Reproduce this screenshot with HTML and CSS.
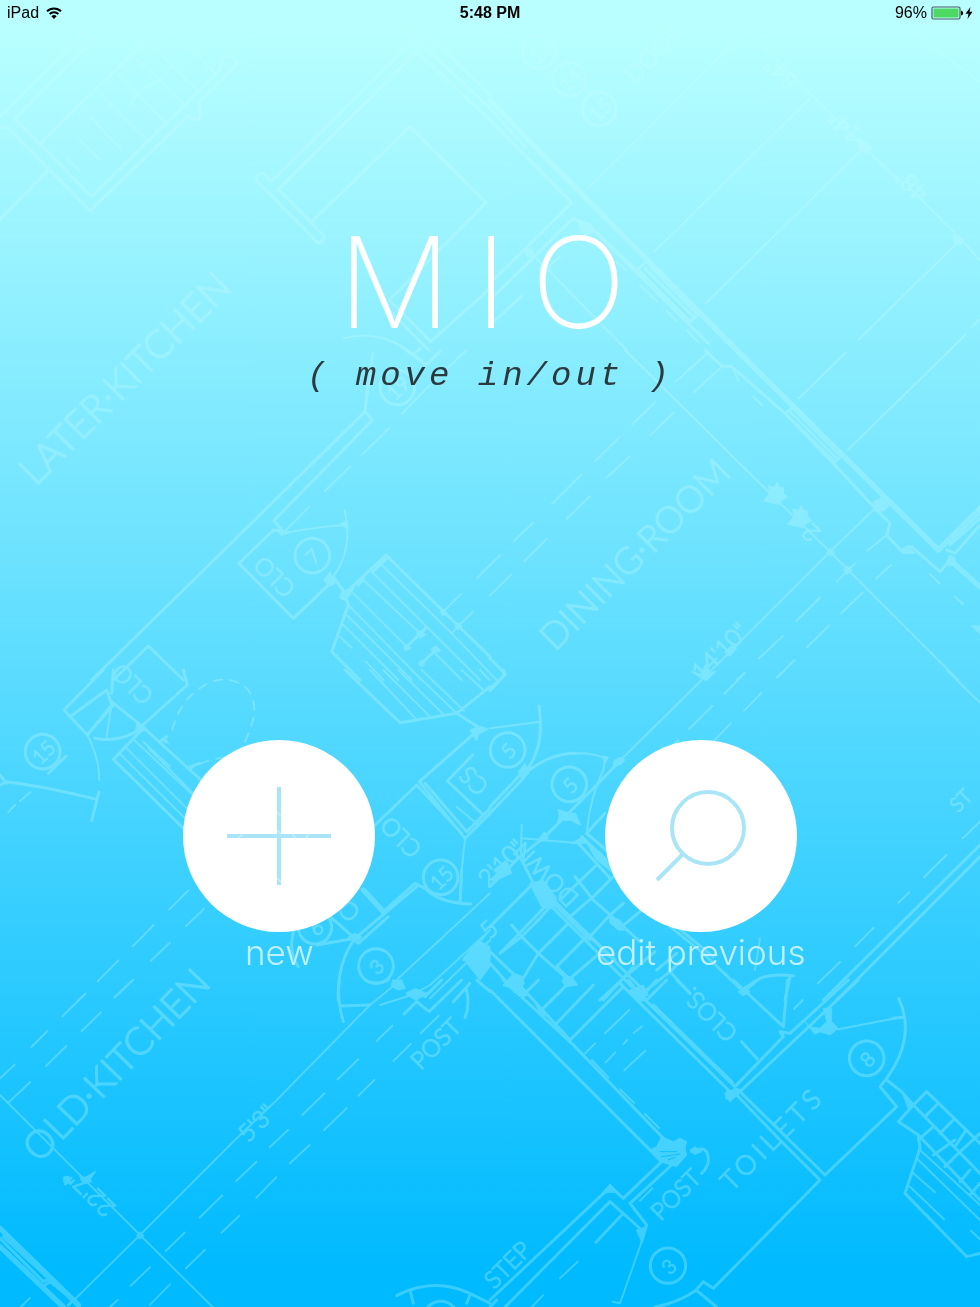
FILE: index.html
```html
<!DOCTYPE html>
<html lang="en">
<head>
<meta charset="utf-8">
<meta name="viewport" content="width=device-width, initial-scale=1">
<title>MIO</title>
<link rel="stylesheet" href="styles.css">
</head>
<body>
<div class="screen">
  <svg class="blueprint" viewBox="0 0 2940 3921" preserveAspectRatio="xMidYMid slice" aria-hidden="true">
    <g class="ink">
      <!-- upper left rooms -->
      <g transform="translate(0 60)">
        <path d="M0 290L260 30M0 325L20 320 270 572 565 288Q590 308 602 290L598 245 712 130Q690 90 665 120L660 150 275 530 45 295 300 40M120 370L450 50M145 450L0 598"/>
        <path class="thin" d="M440 60L595 215M410 115L555 255M350 160L495 305M300 220L440 360M270 290L365 390M235 355L300 420M200 415L240 455M520 30L645 160M390 255L415 215 480 180 520 130"/>
        <path d="M1240 60L815 485 790 460Q765 462 768 480L955 670Q980 660 970 645L835 508 1250 95 1470 300M935 605L1230 320 1458 548 1168 840 1292 965 1470 805M1145 848L1285 990M1210 20L1470 265M1260 20L1470 225"/>
      </g>
      <!-- upper right walls -->
      <g transform="translate(1470 60)">
        <path class="wall" d="M130 375L740 990M0 240L130 375"/>
        <path d="M0 300L245 548 0 790M0 265L105 380M0 840L250 595 300 620 655 970M0 915L95 828"/>
        <path d="M300 620L440 750 470 725M450 755L600 905 630 880M465 745L610 890M478 738L620 882"/>
        <path class="thin" d="M755 45L297 503M965 230L493 695M1120 385L647 850M1405 665L1107 958M770 30L965 225 1120 380 1225 480M1255 500L1405 650 1470 720M120 695L410 990M148 765L210 710M1250 20L1470 185M1380 990L1425 945M1445 920L1470 898M450 795L502 845M530 872L560 904M590 930L625 967M380 725L410 752"/>
        <circle cx="148" cy="95" r="50"/><circle cx="238" cy="177" r="50"/><circle cx="328" cy="267" r="50"/>
        <path class="fill" d="M1100 355l25 10 22 20-22 15-12-12zM1390 645l30 10-5 20-18-4zM265 600l35 10 15 22-30 15-15-20zM100 690l25-5 8 25-20 0zM150 740l18-10 15 18-15 12-18 8z"/>
      </g>
      <!-- closet and stair, middle left -->
      <g transform="translate(0 1050)">
        <path d="M275 990L1095 185 1117 210 822 512 850 545M1095 185L1105 90M850 545L820 540 717 640 880 805 990 700 975 690 1000 680 1035 730 1158 615 1375 828 1470 920"/>
        <path class="thin" d="M1095 185Q1105 120 1118 10M860 548Q950 530 1043 525M1034 480Q1060 600 1000 680"/>
        <path class="thin" d="M1167 235L1085 315M1052 348L975 423M928 470L855 543M1290 105L1205 192M1400 0L1305 90M1383 732L1330 785M1418 787L1375 828M1470 645L1433 683"/>
        <path d="M1205 -10L1278 45 1325 0M1240 15L1260 -5M1035 730L1045 765 995 905 1080 990M1040 730L1060 715M1160 625L1118 665M1075 705L1090 685"/>
        <path class="thin" d="M1140 640L1355 850 1490 990M1115 665L1320 870 1440 990M1090 690L1260 850M1055 725L1220 890M1045 765L1265 990M1040 795L1235 990M1030 825L1195 990M1020 860L1055 893M1098 935L1150 990M1295 900L1385 990M1355 850L1375 828"/>
        <path d="M1280 832L1215 895M1308 900L1262 942"/>
        <path class="fill" d="M835 540l35 5-25 12zM1020 522l22-10 2 25zM972 690l18-25 8 20 12 12-20 12zM1022 730l18-12 14 14-20 20-14-8zM1250 850l12-8 15 12-15 10zM1296 895l12-8 15 15-15 5zM1320 785l10-8 12 12-12 8zM1365 828l10-10 12 12-12 10zM1210 892l8-8 14 10-14 8zM1255 940l8-8 12 10-10 8z"/>
        <circle cx="937" cy="617" r="52"/>
        <circle cx="1192" cy="112" r="52"/>
        <path class="thin" d="M1030 -35Q1150 -70 1270 35"/>
        <path d="M340 990L445 888 550 990"/>
      </g>
      <!-- dining room -->
      <g transform="translate(1470 1050)">
        <path class="wall" d="M740 0L1345 600 1470 475"/>
        <path d="M645 0L695 48 725 50 885 190 1030 340 1155 475 1200 520 1190 555 1238 607 1265 590 1350 665 1380 630"/>
        <path class="wall" d="M1380 630L1475 715"/>
        <path d="M905 175L885 190M890 195L1030 330M900 185L1040 325M912 178L1050 318M1030 340L1050 322M1155 475L1175 445M1380 575L1470 490M1370 600L1395 610 1470 525M1380 585L1470 505"/>
        <path class="thin" d="M405 0L830 420 1020 605 1405 990M1155 475L1020 605 735 890 640 985M1190 555L1132 602M1020 605L1095 680M1095 640L1040 695M1065 10L927 145M1380 0L1073 300M652 10L555 97M695 50L612 127"/>
        <path class="thin" d="M497 155L427 223M550 188L482 255M388 262L316 333M418 320L349 384M275 373L186 461M298 440L230 506M129 518L71 574M170 567L103 633M31 615L0 645M63 674L0 737M1203 645L1158 686M1118 728L1053 790M1018 826L952 891M914 930L860 983M989 744L919 813M879 858L808 924M763 970L740 990M1320 672L1348 700M1395 740L1418 762M790 140L818 167M730 60L745 92"/>
        <path class="fill" d="M822 452l18-25-5-20 18 5 8-15 8 15 12 2-2 16 14 12-14 6-12 14zM893 522l20-25-5-20 18 5 8-15 8 15 12 2-2 16 14 12-14 6-12 14zM1010 607l12-12 12 12-12 12zM1060 660l12-12 15 12-15 12zM1150 455l25-12 22 25-15 15-25 0zM1230 600l25-15 20 25-30 0zM1370 635l8-20 16 8 4 20-20 5zM605 965l28 8 18-40 8 35 20-5-30 30zM705 905l20-18 15 8-18 22zM1445 828l25 0 0 22z"/>
        <path d="M0 925L45 970 30 990 0 1022"/>
      </g>
      <!-- left doors, lower stair -->
      <g transform="translate(0 2010)">
        <path d="M310 0L192 120 262 195 335 105 320 60 210 140M550 0L562 45 425 168 335 95M340 0L335 70M262 195L340 105M425 168L603 330M425 180L340 268 555 480M570 290L600 280M500 200L480 215"/>
        <path class="thin" d="M262 195Q300 270 297 330M320 200L335 100M375 230L570 425M400 208L600 395M430 215L510 290M445 235L580 370M358 250L560 450"/>
        <path d="M285 205Q360 220 425 175M0 345L20 335Q140 350 290 388M297 365L275 452M0 315L20 340M145 310L198 258"/>
        <path class="thin" stroke-dasharray="26 24" d="M735 215Q790 100 735 50Q650 -10 555 95Q520 150 515 190M675 262Q610 270 570 298"/>
        <circle cx="128" cy="245" r="52"/><circle cx="1322" cy="622" r="52"/><circle cx="1128" cy="888" r="52"/><circle cx="945" cy="772" r="50"/>
        <path class="thin" d="M92 366L60 393M45 405L25 427M565 661L508 718M461 765L398 829M355 871L294 933M256 972L235 990M612 716L558 768M509 818L452 873M399 929L344 982"/>
        <path d="M1035 0L1200 158 1370 130 1440 175 1258 335 1395 505 1470 430M1470 50L1370 130M1275 340L1400 485 1470 415M1125 465L1250 345 1385 490M1418 255L1342 333 1445 430"/>
        <path class="thin" d="M1395 505L1385 600M1370 410L1435 465M1110 0L1248 147M1150 0L1290 140M1195 0L1330 133M1235 0L1370 130M1265 0L1392 122M1385 0L1450 60M1440 0L1468 30"/>
        <path class="wall" d="M1090 660L1150 725"/>
        <path d="M1150 725L1245 640 1275 655Q1320 700 1412 702M1065 805L1250 650M1075 820L1165 740M990 740L1065 805 950 825M1065 805Q1010 880 1015 990M880 785Q865 850 895 890M1385 600L1380 700"/>
        <path class="thin" d="M1470 670L1195 925 1180 950M1470 780L1390 870M1245 970L1290 945 1470 780M1470 810L1290 985"/>
        <path class="fill" d="M1410 180l30-12 25 10-28 14-7 20zM1180 930l20 5 15 15-20 10-20-10zM1390 865l45-55 35 20 0 60-30 40-20-25zM1220 968l25-12 40 15-20 10zM1045 800l20-10 20 10-15 20zM412 160l14 5 15 10-15 10-18-5zM480 210l15-10 10 20z"/>
      </g>
      <!-- stairwell -->
      <g transform="translate(1470 2010)">
        <path d="M0 430L100 325 110 300Q165 230 147 108M0 410L95 310M105 310Q180 250 257 250M390 272L315 350 165 500 90 560 0 650M290 490L345 430M0 55L45 15 40 0"/>
        <path class="thin" d="M390 272L635 30M0 175L150 155M257 250Q320 250 345 265L340 300Q300 380 290 490M92 565L95 465M95 505L270 520"/>
        <circle cx="53" cy="240" r="52"/><circle cx="238" cy="343" r="52"/>
        <path d="M95 570L130 640 175 700 450 975M275 500L340 565 370 600M290 490L360 550M265 520L360 625M150 650L460 960M0 880L75 965M180 690L300 810M0 845L100 940M240 740L375 870M255 620L310 690 355 730 450 815M540 770L640 850 760 965M560 770L670 860M30 850L95 800 65 765M95 800L145 850 235 930M250 940L200 890M0 770L130 640M30 850L175 700M95 800L150 745 180 710M145 850L235 760M200 890L290 800M235 930L340 840M75 965L145 850M330 990L400 925 430 890M400 925L470 990M210 690L320 585M240 740L310 680 370 620M300 800L355 740 400 700M450 725L395 770M500 900L560 850M400 925L495 845M340 990L400 925"/>
        <path class="thin" d="M763 10L703 72M815 68L763 122M667 108L598 176M722 160L672 212M885 0L860 22M1370 0L1470 98M1369 556L1302 622M1258 667L1225 698M1151 773L1096 829M1050 876L984 940M1470 455L1418 505M565 210L540 235M810 805L795 900"/>
        <path d="M1470 525L1000 990M1470 560L1040 990M760 965L810 925Q850 910 912 918M900 920L885 990M450 975L540 905 600 970M540 905L580 865"/>
        <path class="fill" d="M205 418l22 8 30 5 15 35-30-15-30 0-10 8 5-22zM245 520l35-20 25 25 45 40 20 45-50-40-30-50zM120 640l40-10 40 55-10 30-35-5zM360 740l30 10 20 30-25 0-25-20zM225 915l25 10 12 20-35 5-10-15zM375 270l15-8 15 8-15 15-20-2zM85 305l20-25 12 30-20 18zM340 258l15 4-10 20zM148 505l15-20 12 20-20 10zM745 965l20-15 15 15-20 12zM0 630l20-20-10-10 40-30 15 40-45 20zM420 960l40-15 15 30-40 15zM40 945l30-35 30 10-5 45z"/>
      </g>
      <!-- old kitchen -->
      <g transform="translate(0 2940)">
        <path class="thin" d="M0 345L250 595 420 765 638 981M220 962L420 765 705 480 820 370 1110 75 1190 10M25 368L90 307M0 295L44 254M256 41L187 109M303 97L245 153M142 153L94 201M199 198L138 258M294 3L297 0M399 0L344 52M1177 137L1130 183M1075 238L1013 298M1123 300L1075 347M974 340L907 405M1040 385L972 450M864 450L809 502M929 495L870 550M769 545L709 603M829 592L769 653M667 646L599 713M718 707L664 758M554 758L497 813M615 809L558 865M450 862L392 917M510 913L450 974M353 960L330 981M90 954L62 981M1232 192L1180 243M1316 107L1262 160M1140 75L1235 45"/>
        <path class="wall" d="M0 745L235 975M0 800L190 981"/>
        <path d="M0 775L130 905M10 770L145 895M130 905L150 895M135 915L150 905 220 960 205 975M1018 0Q1010 60 1030 125M1020 78L1110 75M1095 0Q1125 20 1165 0M1222 45L1250 35 1275 50 1325 0M1212 102L1250 65 1287 95 1385 0M1360 65L1410 10M1400 30Q1410 80 1395 112M1430 0L1470 35"/>
        <path d="M1190 947Q1300 890 1410 940L1470 970M1230 930L1240 970M1410 945L1400 970"/>
        <circle cx="1322" cy="1016" r="52"/>
        <path class="fill" d="M240 590l15 2 32-18-20 30-18 6zM410 765l10-10 12 12-12 10zM1180 0l25 0 10 25-20 5-20-15zM1220 42l30-15 20 15-20 20zM190 592q25-12 20 15l-15 8z"/>
      </g>
      <!-- toilets and lower stair -->
      <g transform="translate(1470 2940)">
        <path d="M0 30L500 530 515 545 400 655 362 620 0 960M40 0L245 190 520 475M75 0L240 180M420 670L545 555M420 670L470 735 455 785M45 981L360 665 455 750M20 960L0 981M395 705L318 787M400 655L415 640M415 0L455 50 735 320 880 170 870 155 900 160 1075 0M390 10L715 330 710 355 740 345 870 480 990 600 670 925 640 905 618 930 680 981M755 330L1105 0M755 340L1005 585 1220 380 1170 320 1190 295M100 45L145 0M150 95L235 10M190 140L310 15M240 180L400 20M460 45L500 0M475 55L530 0M730 0L880 140 893 0M765 25L800 0M560 0L600 40M620 930Q560 970 495 981"/>
        <path d="M1190 300L1235 335 1270 375 1225 425 1285 465 1290 505 1245 640 1430 830 1470 820M1270 375L1310 335 1470 490M1270 375L1470 580M1285 465L1470 660M1340 375L1305 410M1390 420L1350 460M1425 455L1395 500M1330 525L1395 480M1365 560L1405 520 1470 460M1410 605L1440 570M1440 645L1470 610M1285 480L1330 440"/>
        <path class="thin" d="M455 785L390 970 368 965M1290 510L1470 675M1285 540L1470 720M1270 580L1335 637M1260 620L1362 718M1443 752L1470 778M1045 148L1240 110M418 90L345 160M455 140L430 160M412 180L400 192M315 190L285 220M376 217L347 247M466 212L403 271M305 240L355 292M390 328L432 368M465 402L507 444M487 625L450 662M263 845L210 895M159 946L125 981M938 60L912 87"/>
        <path d="M490 75L728 308M1226 55Q1280 170 1190 295M1240 112L1208 115M605 515Q655 490 655 540 655 560 635 580M755 185L802 237"/>
        <circle cx="1130" cy="235" r="52"/><circle cx="534" cy="857" r="53"/>
        <path class="fill" d="M480 510l20-10 15-30 35 15 20-10 20 10-5 20 5 20-30 35-50-15zM945 125l15 15 30 5 20-20-10-40 25 0 0 40 20 20-25 20-30-10-15 8zM75 5l40 40-15 5-35-35zM135 70l40 40-20-5zM440 40l25 0 0 20-15 5zM705 340l30-15 25 5-40 35zM1240 345l35 30-20 10zM600 510l15-10 20 15-20 8zM335 640l25-28 25 25-25 0zM440 750l30-10-15 45z"/>
        <path class="cut" d="M510 515l50 0M515 530l55-8M535 540l20-8"/>
      </g>
      <!-- hand lettering -->
      <g class="lettering">
        <text class="kitchen" transform="translate(108 1462) rotate(-45)">LATER·KITCHEN</text>
        <text class="room" transform="translate(1665 1957) rotate(-45)">DINING·ROOM</text>
        <text class="kitchen" transform="translate(118 3492) rotate(-46)">OLD·KITCHEN</text>
        <text class="note" transform="translate(1262 3212) rotate(-45)">POST</text>
        <text class="note" transform="translate(1982 3665) rotate(-45)">POST</text>
        <text class="wide" transform="translate(2195 3577) rotate(-45)">TOILETS</text>
        <text class="note" transform="translate(1483 3870) rotate(-45)">STEP</text>
        <text class="tag" transform="translate(2874 2440) rotate(-45)">ST</text>
        <text class="note" transform="translate(1905 255) rotate(-45)">DOOR</text>
        <text class="note" transform="translate(890 1762) rotate(225)">CLO</text>
        <text class="note" transform="translate(465 2083) rotate(225)">CLO</text>
        <text class="note" transform="translate(1270 2543) rotate(225)">CLO</text>
        <text class="note" transform="translate(1085 2735) rotate(225)">CL</text>
        <text class="note" transform="translate(1470 2356) rotate(225)">CS</text>
        <text class="note" transform="translate(1740 2690) rotate(225)">DOWN</text>
        <text class="note" transform="translate(2217 3095) rotate(225)">CLOS.</text>
        <text class="note" transform="translate(2465 1595) rotate(225)">2</text>
        <text class="note" transform="translate(2105 2045) rotate(-45)">14'10"</text>
        <text class="note" transform="translate(1465 2665) rotate(-45)">2'10"</text>
        <text class="note" transform="translate(1470 2820) rotate(-45)">5</text>
        <text class="note" transform="translate(745 3430) rotate(-45)">5'3"</text>
        <text class="note" transform="translate(350 3620) rotate(225)">22'7"</text>
        <text class="note" transform="translate(2790 575) rotate(225)">48"</text>
        <text class="note" transform="translate(2590 400) rotate(225)">14"</text>
        <text class="note" transform="translate(2400 240) rotate(225)">84"</text>
        <g text-anchor="middle">
          <text class="tag" transform="translate(954 1685) rotate(-45)">7</text>
          <text class="tag" transform="translate(1210 1179) rotate(-45)">19</text>
          <text class="tag" transform="translate(146 2272) rotate(-45)">15</text>
          <text class="tag" transform="translate(1340 2649) rotate(-45)">15</text>
          <text class="tag" transform="translate(1146 2916) rotate(-45)">3</text>
          <text class="tag" transform="translate(963 2799) rotate(-45)">6</text>
          <text class="tag" transform="translate(1541 2268) rotate(-45)">5</text>
          <text class="tag" transform="translate(1726 2371) rotate(-45)">5</text>
          <text class="tag" transform="translate(2618 3193) rotate(-45)">8</text>
          <text class="tag" transform="translate(2022 3815) rotate(-45)">3</text>
          <text class="tag" transform="translate(1816 345) rotate(-45)">15</text>
          <text class="tag" transform="translate(1726 255) rotate(-45)">14</text>
          <text class="tag" transform="translate(1636 173) rotate(-45)">13</text>
        </g>
      </g>
    </g>
  </svg>

  <header class="status">
    <div class="status-left">
      <span>iPad</span>
      <svg width="16" height="12" viewBox="0 0 16 12" aria-label="Wi-Fi" role="img">
        <path d="M1 4.3a10 10 0 0 1 14 0M3.6 7a6.3 6.3 0 0 1 8.8 0" fill="none" stroke="#000" stroke-width="2"/>
        <path d="M8 12L5.4 9.3a3.7 3.7 0 0 1 5.2 0z"/>
      </svg>
    </div>
    <time class="status-time">5:48 PM</time>
    <div class="status-right">
      <span>96%</span>
      <svg width="42" height="14" viewBox="0 0 42 14" aria-label="Battery charging" role="img">
        <rect x="1" y="1" width="28" height="12" rx="1.5" fill="none" stroke="#4a5a60" stroke-width="1.2"/>
        <rect x="2.5" y="2.5" width="25" height="9" fill="#4cd964"/>
        <path d="M30 4.5q2.200 .5 2.200 2.500t-2.200 2.500z"/>
        <path d="M39.500 1L34.500 7.800h3L36.500 13 41.500 5.800h-3z"/>
      </svg>
    </div>
  </header>

  <main class="home">
    <div class="brand">
      <h1 class="logo">MIO</h1>
      <p class="tagline">( move in/out )</p>
    </div>
    <nav class="actions" aria-label="Start">
      <button class="action" type="button">
        <svg class="disc" viewBox="0 0 192 192" aria-hidden="true">
          <circle cx="96" cy="96" r="96" fill="#fff"/>
          <path class="glyph" d="M44 96H148M96 47V145"/>
          <path d="M55 98l5-4M94 72l4 4M94 90l4 4M109 94l4 4M123 98l3-4M94 138l4 4" stroke="#c4eff9" stroke-width="1.500"/>
        </svg>
        <span class="caption">new</span>
      </button>
      <button class="action" type="button">
        <svg class="disc" viewBox="0 0 192 192" aria-hidden="true">
          <circle cx="96" cy="96" r="96" fill="#fff"/>
          <circle class="glyph" cx="103" cy="88" r="36"/>
          <path class="glyph" d="M78 114L52 140"/>
        </svg>
        <span class="caption">edit previous</span>
      </button>
    </nav>
  </main>
</div>
</body>
</html>
```

FILE: styles.css
```css
* { box-sizing: border-box; }

body {
  margin: 0;
  font-family: "Liberation Sans", sans-serif;
  color: #000;
}

.screen {
  position: relative;
  display: flex;
  flex-direction: column;
  min-height: 100vh;
  overflow: hidden;
  background: linear-gradient(#b9ffff 2%, #5cdcff 51%, #00baff 97%);
}

.blueprint {
  position: absolute;
  inset: 0;
  width: 100%;
  height: 100%;
}

.ink {
  fill: none;
  stroke: #caffff;
  stroke-width: 9;
  stroke-linecap: round;
  stroke-linejoin: round;
  opacity: 0.28;
}

.ink .thin { stroke-width: 6; }
.ink .wall { stroke-width: 16; }
.ink .fill { fill: #caffff; stroke-width: 3; }
.ink .cut { stroke: #00baff; stroke-width: 3; }

.lettering {
  fill: #caffff;
  stroke-width: 4;
  font-family: Lato, sans-serif;
  font-weight: 300;
}

.kitchen { font-size: 115px; }
.room { font-size: 110px; }
.note { font-size: 72px; }
.wide { font-size: 80px; letter-spacing: 14px; }
.tag { font-size: 60px; }

.status {
  position: relative;
  display: grid;
  grid-template-columns: 1fr auto 1fr;
  align-items: center;
  padding: 4px 7px 0;
  font-size: 16px;
  line-height: 18px;
}

.status-left,
.status-right {
  display: flex;
  align-items: center;
  gap: 7px;
}

.status-right {
  justify-content: flex-end;
  gap: 4px;
}

.status-time { font-weight: 700; }

.home {
  position: relative;
  display: flex;
  flex-direction: column;
  align-items: center;
  gap: 344px;
  padding: 194px 0 40px;
}

.brand { text-align: center; }

.logo {
  margin: 0;
  font-family: Inter, sans-serif;
  font-size: 126px;
  font-weight: 200;
  line-height: 132px;
  letter-spacing: 24px;
  text-indent: 8px;
  color: #fff;
}

.tagline {
  margin: 8px 0 0;
  font-family: "Liberation Mono", monospace;
  font-size: 34px;
  font-style: italic;
  line-height: 40px;
  letter-spacing: 4px;
  color: #2c3a3e;
}

.actions {
  display: grid;
  grid-template-columns: 1fr 1fr;
  width: 86%;
}

.action {
  display: flex;
  flex-direction: column;
  align-items: center;
  padding: 0;
  border: 0;
  background: none;
  color: #c0f0ff;
  font-family: Inter, sans-serif;
  font-size: 35px;
  font-weight: 300;
  line-height: 40px;
  cursor: pointer;
}

.disc {
  display: block;
  width: 192px;
  height: 192px;
}

.glyph {
  fill: none;
  stroke: #a9e5f7;
  stroke-width: 4;
}
```
